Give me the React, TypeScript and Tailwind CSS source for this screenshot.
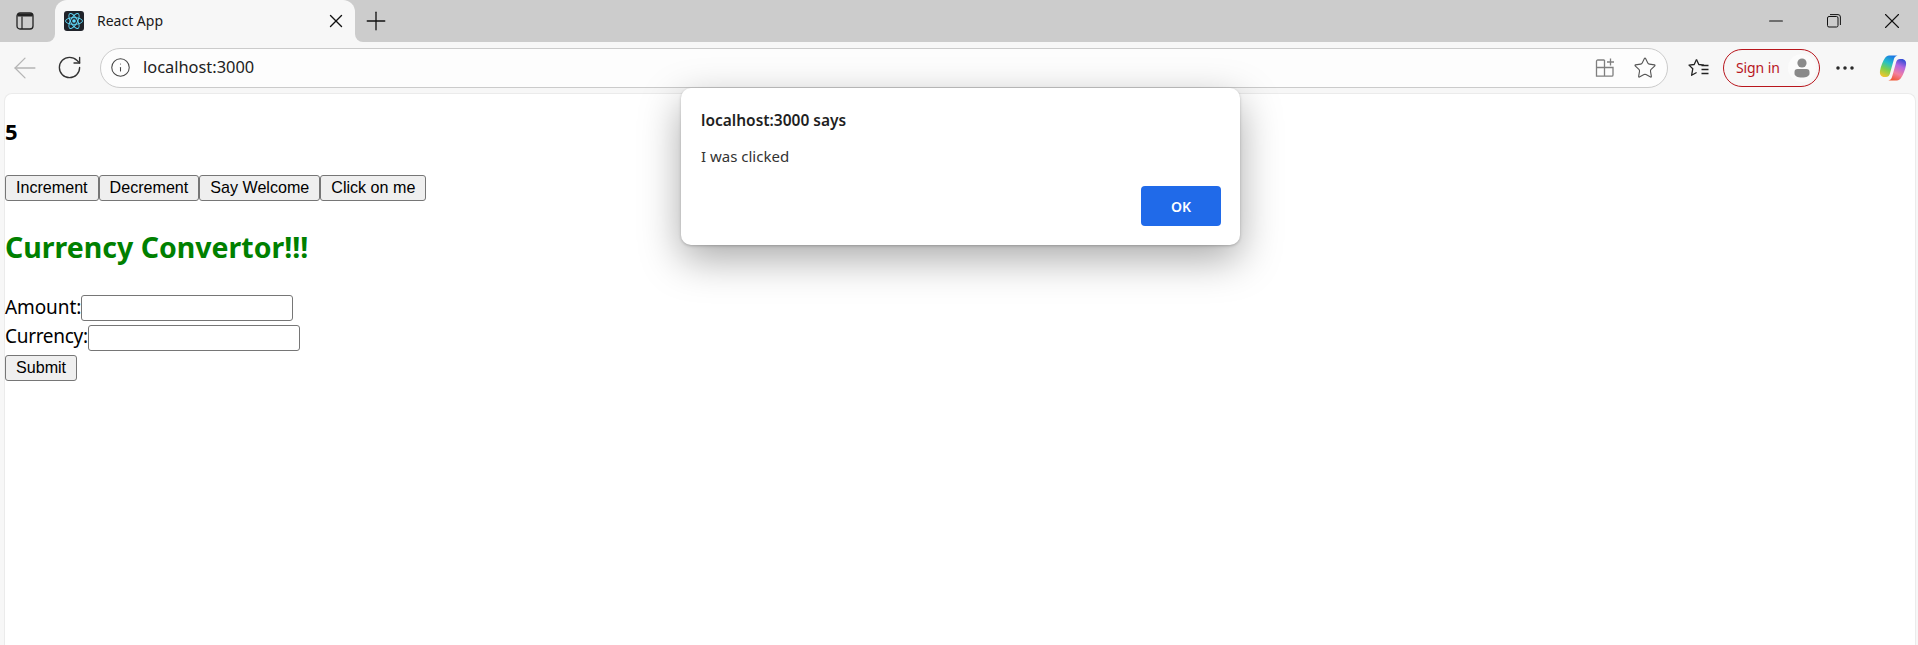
import { ArrowLeft, Info, Minus, MoreHorizontal, Plus, RotateCw, Star, X } from "lucide-react";

const uiFont = "font-['Noto_Sans','Open_Sans',sans-serif]";
const nativeBtn =
  "h-[26px] rounded-[3px] border border-[#767676] bg-[#efefef] px-[10px] pb-[1px] font-['Liberation_Sans',Arial,sans-serif] text-[16.1px] leading-none text-black";
const nativeInput = "h-[26px] w-[212px] rounded-[3px] border border-[#767676] bg-white";

function SidebarIcon() {
  return (
    <svg width="18" height="18" viewBox="0 0 18 18" fill="none">
      <rect x="1" y="1" width="16" height="16" rx="3" stroke="#222" strokeWidth="1.3" />
      <path d="M1.5 1.5h15v3h-15z" fill="#222" />
      <path d="M6 4.5V17" stroke="#222" strokeWidth="1.2" />
    </svg>
  );
}

function ReactFavicon() {
  return (
    <svg width="20" height="20" viewBox="0 0 20 20" fill="none">
      <rect width="20" height="20" rx="3" fill="#20232a" />
      <circle cx="10" cy="10" r="1.8" fill="#61dafb" />
      <g stroke="#61dafb" strokeWidth="0.9">
        <ellipse cx="10" cy="10" rx="8.5" ry="3.4" />
        <ellipse cx="10" cy="10" rx="8.5" ry="3.4" transform="rotate(60 10 10)" />
        <ellipse cx="10" cy="10" rx="8.5" ry="3.4" transform="rotate(120 10 10)" />
      </g>
    </svg>
  );
}

function RestoreIcon() {
  return (
    <svg width="14" height="14" viewBox="0 0 14 14" fill="none" stroke="#111" strokeWidth="1">
      <rect x="0.5" y="2.5" width="10.5" height="10.5" rx="1.5" />
      <path d="M3 .6h8a2.4 2.4 0 0 1 2.4 2.4v8" />
    </svg>
  );
}

function AppsPlusIcon() {
  return (
    <svg width="20" height="20" viewBox="0 0 20 20" fill="none" stroke="#7f7f7f" strokeWidth="1.3">
      <path d="M9.5 2H2.8A1.3 1.3 0 0 0 1.5 3.3V18.2h15.2a1.3 1.3 0 0 0 1.3-1.3V9.5H1.5M9.5 2v16.2" />
      <path d="M15.5 .5v7M12 4h7" />
    </svg>
  );
}

function FavoritesIcon() {
  return (
    <svg width="21" height="20" viewBox="0 0 21 20" fill="none" stroke="#222" strokeWidth="1.3">
      <path d="M8.5 1.5l2.3 5 5.2.6" strokeLinejoin="round" />
      <path d="M8.5 1.5l-2.3 5-5.2.6 3.8 3.6-1.2 6.6 5-2.8" strokeLinejoin="round" />
      <path d="M13.5 7.5h7M13.5 11.5h7M13.5 15.5h7" />
    </svg>
  );
}

function AvatarIcon() {
  return (
    <svg width="16" height="20" viewBox="0 0 16 20" fill="#8a8a8a">
      <circle cx="8" cy="5" r="4.6" />
      <path d="M.5 14a3 3 0 0 1 3-3h9a3 3 0 0 1 3 3v1.5c0 2.5-3 4-7.5 4s-7.5-1.5-7.5-4z" />
    </svg>
  );
}

function CopilotIcon() {
  return (
    <svg width="28" height="28" viewBox="0 0 28 28" fill="none">
      <defs>
        <linearGradient id="cpLeft" x1="0.6" y1="0" x2="0.2" y2="1">
          <stop offset="0" stopColor="#1b78e6" />
          <stop offset="0.35" stopColor="#25c0c8" />
          <stop offset="0.65" stopColor="#7ed04b" />
          <stop offset="1" stopColor="#f5c52c" />
        </linearGradient>
        <linearGradient id="cpRight" x1="0.7" y1="0" x2="0.3" y2="1">
          <stop offset="0" stopColor="#3a4fd6" />
          <stop offset="0.3" stopColor="#b566e0" />
          <stop offset="0.65" stopColor="#f27fa0" />
          <stop offset="1" stopColor="#f0552e" />
        </linearGradient>
      </defs>
      <path
        d="M10 1.5H20C16.5 1.5 15.5 3 14.7 6L10.8 20C10.2 22 9 23 7 23H5.5C2 23 .5 20.5 1 17 1.8 12 4 7 6 4 7 2.5 8.5 1.5 10 1.5Z"
        fill="url(#cpLeft)"
      />
      <path
        d="M18 26.5H8C11.5 26.5 12.5 25 13.3 22L17.2 8C17.8 6 19 5 21 5H22.5C26 5 27.5 7.5 27 11 26.2 16 24 21 22 24 21 25.5 19.5 26.5 18 26.5Z"
        fill="url(#cpRight)"
      />
    </svg>
  );
}

function TabStrip() {
  return (
    <div className="flex h-[42px] bg-[#cccccc]">
      <div className="w-[55px] bg-[#f7f7f7]">
        <div className="flex h-full items-center justify-center rounded-br-[8px] bg-[#cccccc] pr-[6px]">
          <SidebarIcon />
        </div>
      </div>
      <div className="flex w-[300px] items-center rounded-t-[12px] bg-[#f7f7f7] pl-[9px] pr-[8px]">
        <ReactFavicon />
        <span className="mb-[2px] ml-[13px] flex-1 text-[14px] text-[#1a1a1a]">React App</span>
        <X size={22} strokeWidth={1.5} color="#111" />
      </div>
      <div className="flex-1 bg-[#f7f7f7]">
        <div className="flex h-full items-center rounded-bl-[8px] bg-[#cccccc] pl-[6px]">
          <Plus size={30} strokeWidth={1.05} color="#111" />
          <div className="flex-1" />
          <div className="flex items-center pr-[13px]">
            <Minus size={22} strokeWidth={1.1} color="#111" />
            <span className="ml-[40px]">
              <RestoreIcon />
            </span>
            <X size={26} strokeWidth={1} color="#111" className="ml-[38px]" />
          </div>
        </div>
      </div>
    </div>
  );
}

function Toolbar() {
  return (
    <div className="flex h-[51px] items-center bg-[#f7f7f7] pl-[8px] pr-[11px]">
      <ArrowLeft size={34} strokeWidth={0.9} color="#b5b5b5" />
      <RotateCw size={27} strokeWidth={1.2} color="#333" className="ml-[14px]" />
      <div className="ml-[17px] flex h-[40px] flex-1 items-center rounded-full border border-[#cbcbcb] bg-[#fdfdfd] pl-[9px] pr-[10px]">
        <Info size={21} strokeWidth={1.2} color="#444" />
        <span className="ml-[12px] flex-1 text-[16.4px] text-[#222]">localhost:3000</span>
        <AppsPlusIcon />
        <Star size={24} strokeWidth={1.1} color="#555" className="ml-[18px]" />
      </div>
      <div className="ml-[20px]">
        <FavoritesIcon />
      </div>
      <div className="ml-[14px] flex h-[38px] w-[97px] items-center rounded-full border border-[#b8161d] pl-[12px]">
        <span className="flex-1 text-[14px] tracking-[-0.1px] text-[#b8161d]">Sign in</span>
        <span className="mr-[3px] flex h-[28px] w-[28px] items-center justify-center rounded-full bg-[#fbfbfb]">
          <AvatarIcon />
        </span>
      </div>
      <MoreHorizontal size={24} strokeWidth={1.5} color="#222" className="ml-[13px]" />
      <div className="ml-[22px]">
        <CopilotIcon />
      </div>
    </div>
  );
}

function AlertDialog() {
  return (
    <div className="absolute left-[681px] top-[88px] h-[157px] w-[559px] rounded-[10px] bg-white pl-[20px] pr-[19px] pt-[20px] shadow-[0_14px_40px_rgba(0,0,0,0.34),0_1px_3px_rgba(0,0,0,0.22)]">
      <p className="text-[15.5px] font-semibold leading-[24px] text-[#1f1f1f]">localhost:3000 says</p>
      <p className="mt-[12px] text-[15px] leading-[24px] text-[#333]">I was clicked</p>
      <div className="mt-[18px] flex justify-end">
        <button className="h-[40px] w-[80px] rounded-[4px] bg-[#206ae9] text-[14px] font-semibold text-white">OK</button>
      </div>
    </div>
  );
}

export default function App() {
  return (
    <div className={`relative h-[645px] overflow-hidden bg-[#f7f7f7] ${uiFont}`}>
      <TabStrip />
      <Toolbar />
      <div className="ml-[4px] mr-[2px] h-[552px] rounded-t-[8px] border-x border-t border-[#ebebeb] bg-white pt-[22px] text-black">
        <h3 className="text-[22px] font-bold leading-[30px]">5</h3>
        <div className="mt-[29px] flex">
          <button className={nativeBtn}>Increment</button>
          <button className={nativeBtn}>Decrement</button>
          <button className={nativeBtn}>Say Welcome</button>
          <button className={nativeBtn}>Click on me</button>
        </div>
        <h2 className="mt-[27px] mb-[1px] text-[28.5px] font-bold leading-[38px] text-[#008000]">Currency Convertor!!!</h2>
        <form className="mt-[29px] flex flex-col items-start gap-[4px] text-[19px] leading-[26px]">
          <label className="flex h-[26px] items-center">
            <span className="pb-[2px] tracking-[-0.1px]">Amount:</span>
            <input className={nativeInput} />
          </label>
          <label className="flex h-[26px] items-center">
            <span className="pb-[4px] tracking-[-0.3px]">Currency:</span>
            <input className={nativeInput} />
          </label>
          <button type="button" className={nativeBtn}>Submit</button>
        </form>
      </div>
      <AlertDialog />
    </div>
  );
}
